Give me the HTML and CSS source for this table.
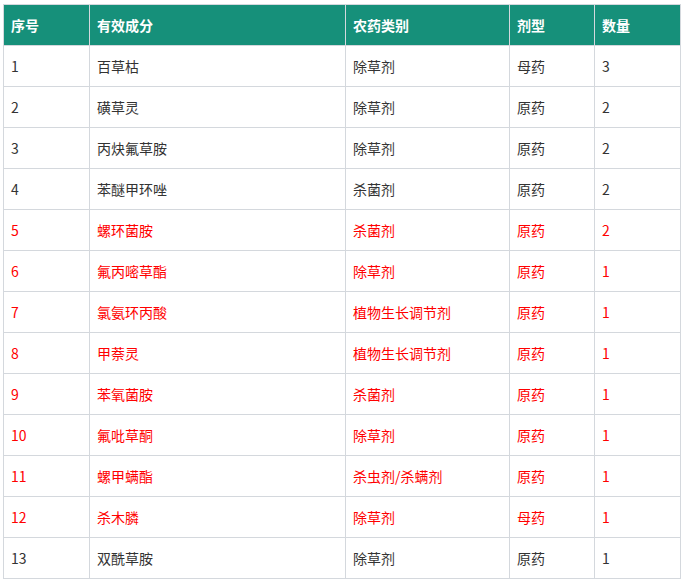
FILE: index.html
```html
<!DOCTYPE html>
<html lang="zh">
<head>
<meta charset="utf-8">
<link rel="stylesheet" href="styles.css">
</head>
<body>
<table class="tbl">
  <colgroup>
    <col class="c1"><col class="c2"><col class="c3"><col class="c4"><col class="c5">
  </colgroup>
  <thead>
    <tr><th>序号</th><th>有效成分</th><th>农药类别</th><th>剂型</th><th>数量</th></tr>
  </thead>
  <tbody>
    <tr><td>1</td><td>百草枯</td><td>除草剂</td><td>母药</td><td>3</td></tr>
    <tr><td>2</td><td>磺草灵</td><td>除草剂</td><td>原药</td><td>2</td></tr>
    <tr><td>3</td><td>丙炔氟草胺</td><td>除草剂</td><td>原药</td><td>2</td></tr>
    <tr><td>4</td><td>苯醚甲环唑</td><td>杀菌剂</td><td>原药</td><td>2</td></tr>
    <tr class="red"><td>5</td><td>螺环菌胺</td><td>杀菌剂</td><td>原药</td><td>2</td></tr>
    <tr class="red"><td>6</td><td>氟丙嘧草酯</td><td>除草剂</td><td>原药</td><td>1</td></tr>
    <tr class="red"><td>7</td><td>氯氨环丙酸</td><td>植物生长调节剂</td><td>原药</td><td>1</td></tr>
    <tr class="red"><td>8</td><td>甲萘灵</td><td>植物生长调节剂</td><td>原药</td><td>1</td></tr>
    <tr class="red"><td>9</td><td>苯氧菌胺</td><td>杀菌剂</td><td>原药</td><td>1</td></tr>
    <tr class="red"><td>10</td><td>氟吡草酮</td><td>除草剂</td><td>原药</td><td>1</td></tr>
    <tr class="red"><td>11</td><td>螺甲螨酯</td><td>杀虫剂/杀螨剂</td><td>原药</td><td>1</td></tr>
    <tr class="red"><td>12</td><td>杀木膦</td><td>除草剂</td><td>母药</td><td>1</td></tr>
    <tr><td>13</td><td>双酰草胺</td><td>除草剂</td><td>原药</td><td>1</td></tr>
  </tbody>
</table>
</body>
</html>
```
FILE: styles.css
```css
html, body {
  margin: 0;
  background: #ffffff;
}
body {
  padding: 4px 0 0 3px;
  font-family: "Noto Sans CJK SC", "Noto Sans", sans-serif;
  font-size: 14px;
  color: #333333;
}
.tbl {
  border-collapse: collapse;
  table-layout: fixed;
  width: 677px;
  border: 1px solid #d4d8dd;
}
.c1 { width: 86px; }
.c2 { width: 256px; }
.c3 { width: 164px; }
.c4 { width: 85px; }
.c5 { width: 86px; }
.tbl th, .tbl td {
  border: 1px solid #d4d8dd;
  height: 40px;
  padding: 0 7px;
  text-align: left;
  vertical-align: middle;
  line-height: 20px;
  white-space: nowrap;
}
.tbl th {
  background: #16907a;
  color: #ffffff;
  font-weight: bold;
}
.tbl tr.red td {
  color: #ff0000;
}
```
